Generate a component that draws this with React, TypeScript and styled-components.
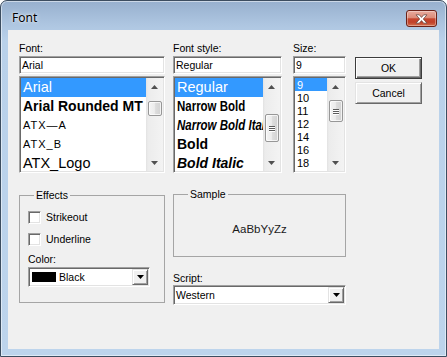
import React from 'react';
import styled, { createGlobalStyle, css } from 'styled-components';

const GlobalStyle = createGlobalStyle`
  html, body { margin: 0; padding: 0; background: #ffffff; }
  body { font-family: 'Liberation Sans', Arial, sans-serif; }
  * { box-sizing: border-box; }
`;

const sunken = css`
  border: 1px solid;
  border-color: #a0a0a0 #ffffff #ffffff #a0a0a0;
  box-shadow: inset 1px 1px 0 #696969, inset -1px -1px 0 #e3e3e3;
`;

const raised = css`
  border: 1px solid;
  border-color: #e3e3e3 #696969 #696969 #e3e3e3;
  box-shadow: inset 1px 1px 0 #ffffff, inset -1px -1px 0 #a0a0a0;
  background: #f0f0f0;
`;

const Frame = styled.div`
  width: 447px;
  height: 357px;
  border: 1px solid #3c4d60;
  border-radius: 7px 7px 0 0;
  background: linear-gradient(180deg, #97b0ce 0px, #aec6e1 24px, #b9d1ea 40px, #bdd4ec 100%);
  box-shadow: inset 0 0 0 1px rgba(255, 255, 255, 0.5);
  display: flex;
  flex-direction: column;
  overflow: hidden;
`;

const TitleBar = styled.div`
  height: 29px;
  flex-shrink: 0;
  display: flex;
  align-items: flex-start;
  justify-content: space-between;
  padding: 0 9px 0 11px;
`;

const Title = styled.span`
  font-family: 'Noto Sans', 'Open Sans', sans-serif;
  font-size: 12px;
  line-height: 16px;
  margin-top: 9px;
  color: #000;
  text-shadow: 0 0 5px rgba(255, 255, 255, 0.8), 0 0 2px rgba(255, 255, 255, 0.8);
`;

const CloseButton = styled.div`
  margin-top: 9px;
  width: 31px;
  height: 17px;
  border: 1px solid #6b2218;
  border-radius: 3px;
  background: linear-gradient(180deg, #e8ab9e 0%, #dc8c79 45%, #c6462e 52%, #c1412a 75%, #d4704f 100%);
  box-shadow: inset 0 0 0 1px rgba(255, 255, 255, 0.35);
  display: flex;
  align-items: center;
  justify-content: center;
`;

const Client = styled.div`
  margin: 0 7px 7px 7px;
  flex: 1;
  background: #f0f0f0;
  padding: 11px 0 0 11px;
  display: flex;
  flex-direction: column;
  font-size: 10.5px;
  color: #000;
`;

const TopRow = styled.div`
  display: flex;
  align-items: flex-start;
`;

const Column = styled.div<{ $w: number; $ml?: number; $mt?: number }>`
  width: ${(p) => p.$w}px;
  margin-left: ${(p) => p.$ml ?? 0}px;
  margin-top: ${(p) => p.$mt ?? 0}px;
  display: flex;
  flex-direction: column;
  flex-shrink: 0;
`;

const Label = styled.div`
  height: 14px;
  line-height: 14px;
  white-space: nowrap;
`;

const Edit = styled.div`
  ${sunken};
  margin-top: 1px;
  height: 18px;
  background: #fff;
  padding: 0 2px;
  line-height: 14px;
  display: flex;
  align-items: center;
  white-space: nowrap;
`;

const ListBox = styled.div`
  ${sunken};
  margin-top: 2px;
  height: 97px;
  background: #fff;
  padding: 1px;
  display: flex;
`;

const Items = styled.div`
  flex: 1;
  overflow: hidden;
  display: flex;
  flex-direction: column;
`;

const Item = styled.div<{
  $h: number;
  $size: number;
  $sel?: boolean;
  $bold?: boolean;
  $italic?: boolean;
  $spacing?: number;
  $lift?: number;
}>`
  height: ${(p) => p.$h}px;
  flex-shrink: 0;
  display: flex;
  align-items: center;
  padding-left: 2px;
  padding-bottom: ${(p) => p.$lift ?? 0}px;
  white-space: nowrap;
  overflow: hidden;
  font-size: ${(p) => p.$size}px;
  font-weight: ${(p) => (p.$bold ? 700 : 400)};
  font-style: ${(p) => (p.$italic ? 'italic' : 'normal')};
  letter-spacing: ${(p) => p.$spacing ?? 0}px;
  background: ${(p) => (p.$sel ? '#3399ff' : 'transparent')};
  color: ${(p) => (p.$sel ? '#ffffff' : '#000000')};
`;

const Narrow = styled.span`
  display: inline-block;
  transform: scaleX(0.82);
  transform-origin: left center;
`;

const ScrollBar = styled.div`
  width: 17px;
  flex-shrink: 0;
  display: flex;
  flex-direction: column;
  background: linear-gradient(90deg, #e2e2e2 0px, #ececec 2px, #f3f3f3 100%);
`;

const Arrow = styled.div`
  height: 17px;
  flex-shrink: 0;
  display: flex;
  align-items: center;
  justify-content: center;
`;

const Track = styled.div`
  flex: 1;
  display: flex;
  flex-direction: column;
`;

const Thumb = styled.div<{ $top: number; $h: number }>`
  margin: ${(p) => p.$top}px 1px 0 2px;
  height: ${(p) => p.$h}px;
  border: 1px solid #979797;
  border-radius: 2px;
  background: linear-gradient(90deg, #f4f4f4 0%, #ececec 45%, #dcdcdc 55%, #d2d2d2 100%);
  box-shadow: inset 0 0 0 1px rgba(255, 255, 255, 0.7);
  display: flex;
  flex-direction: column;
  align-items: center;
  justify-content: center;
  gap: 1px;
`;

const Grip = styled.div`
  width: 6px;
  height: 1px;
  background: #5c5c5c;
  box-shadow: 0 1px 0 #ffffff;
`;

const PushButton = styled.div<{ $default?: boolean }>`
  height: 22px;
  display: flex;
  align-items: center;
  justify-content: center;
  ${(p) =>
    p.$default
      ? css`
          border: 1px solid #3c3c3c;
          background: #f0f0f0;
          box-shadow: inset 1px 1px 0 #ffffff, inset -1px -1px 0 #696969, inset -2px -2px 0 #a0a0a0;
        `
      : raised};
`;

const ButtonStack = styled.div`
  margin-top: 16px;
  display: flex;
  flex-direction: column;
  gap: 3px;
`;

const BottomRow = styled.div`
  display: flex;
  align-items: flex-start;
  margin-top: 16px;
`;

const Group = styled.fieldset<{ $w: number; $h: number }>`
  margin: 0;
  padding: 0 8px;
  min-width: 0;
  width: ${(p) => p.$w}px;
  height: ${(p) => p.$h}px;
  border: 1px solid #a5a5a5;
`;

const Legend = styled.legend`
  margin-left: 6px;
  padding: 0 2px;
  line-height: 13px;
  font-size: 10.5px;
`;

const EffectsBody = styled.div`
  padding-top: 9px;
  display: flex;
  flex-direction: column;
`;

const CheckRow = styled.div<{ $mt?: number }>`
  display: flex;
  align-items: center;
  height: 13px;
  margin-top: ${(p) => p.$mt ?? 0}px;
`;

const CheckBox = styled.div`
  ${sunken};
  width: 13px;
  height: 13px;
  background: #fff;
  flex-shrink: 0;
`;

const CheckText = styled.span`
  margin-left: 5px;
  line-height: 13px;
`;

const FieldLabel = styled.div<{ $mt: number }>`
  height: 13px;
  line-height: 13px;
  margin-top: ${(p) => p.$mt}px;
`;

const Combo = styled.div<{ $w: number; $mt?: number }>`
  ${sunken};
  width: ${(p) => p.$w}px;
  height: 20px;
  margin-top: ${(p) => p.$mt ?? 0}px;
  background: #fff;
  padding: 1px;
  display: flex;
  align-items: stretch;
`;

const ComboValue = styled.div`
  flex: 1;
  display: flex;
  align-items: center;
  padding-left: 1px;
  gap: 3px;
  white-space: nowrap;
  overflow: hidden;
`;

const Swatch = styled.div<{ $color: string }>`
  width: 24px;
  height: 10px;
  background: ${(p) => p.$color};
  margin-left: 1px;
`;

const DropButton = styled.div`
  ${raised};
  width: 16px;
  flex-shrink: 0;
  display: flex;
  align-items: center;
  justify-content: center;
`;

const SampleBody = styled.div`
  height: 55px;
  display: flex;
  align-items: center;
  justify-content: center;
  font-size: 11.5px;
  color: #1a1a1a;
`;

const UpTri = () => (
  <svg width="7" height="4" viewBox="0 0 7 4">
    <path d="M3.5 0 L7 4 L0 4 Z" fill="#505050" />
  </svg>
);
const DownTri = ({ color = '#505050' }: { color?: string }) => (
  <svg width="7" height="4" viewBox="0 0 7 4">
    <path d="M0 0 L7 0 L3.5 4 Z" fill={color} />
  </svg>
);

type Row = {
  text: string;
  size: number;
  sel?: boolean;
  bold?: boolean;
  italic?: boolean;
  narrow?: boolean;
  spacing?: number;
};

const fontRows: Row[] = [
  { text: 'Arial', size: 14.5, sel: true },
  { text: 'Arial Rounded MT', size: 14, bold: true },
  { text: 'ATX—A', size: 11, spacing: 1 },
  { text: 'ATX_B', size: 11, spacing: 1 },
  { text: 'ATX_Logo', size: 14.5 },
];

const styleRows: Row[] = [
  { text: 'Regular', size: 14.5, sel: true },
  { text: 'Narrow Bold', size: 14, bold: true, narrow: true },
  { text: 'Narrow Bold Italic', size: 14, bold: true, italic: true, narrow: true },
  { text: 'Bold', size: 14, bold: true },
  { text: 'Bold Italic', size: 14, bold: true, italic: true },
];

const sizeRows: Row[] = ['9', '10', '11', '12', '14', '16', '18'].map((t, i) => ({
  text: t,
  size: 11,
  sel: i === 0,
}));

const List = ({
  rows,
  rowH,
  lift,
  thumbTop,
  thumbH,
  grip,
}: {
  rows: Row[];
  rowH: number;
  lift?: number;
  thumbTop: number;
  thumbH: number;
  grip?: boolean;
}) => (
  <ListBox>
    <Items>
      {rows.map((r) => (
        <Item
          key={r.text}
          $h={rowH}
          $lift={lift}
          $size={r.size}
          $sel={r.sel}
          $bold={r.bold}
          $italic={r.italic}
          $spacing={r.spacing}
        >
          {r.narrow ? <Narrow>{r.text}</Narrow> : r.text}
        </Item>
      ))}
    </Items>
    <ScrollBar>
      <Arrow>
        <UpTri />
      </Arrow>
      <Track>
        <Thumb $top={thumbTop} $h={thumbH}>
          {grip && (
            <>
              <Grip />
              <Grip />
              <Grip />
            </>
          )}
        </Thumb>
      </Track>
      <Arrow>
        <DownTri />
      </Arrow>
    </ScrollBar>
  </ListBox>
);

export default function App() {
  return (
    <>
      <GlobalStyle />
      <Frame>
        <TitleBar>
          <Title>Font</Title>
          <CloseButton>
            <svg width="13" height="10" viewBox="0 0 13 10">
              <path
                d="M1 0.8 L4.3 0.8 L6.5 3.4 L8.7 0.8 L12 0.8 L8.3 5 L12 9.2 L8.7 9.2 L6.5 6.6 L4.3 9.2 L1 9.2 L4.7 5 Z"
                fill="#ffffff"
                stroke="#6a4a44"
                strokeWidth="0.8"
                strokeLinejoin="round"
              />
            </svg>
          </CloseButton>
        </TitleBar>
        <Client>
          <TopRow>
            <Column $w={146}>
              <Label>Font:</Label>
              <Edit>Arial</Edit>
              <List rows={fontRows} rowH={19} lift={2} thumbTop={6} thumbH={15} />
            </Column>
            <Column $w={109} $ml={8}>
              <Label>Font style:</Label>
              <Edit>Regular</Edit>
              <List rows={styleRows} rowH={19} lift={2} thumbTop={19} thumbH={28} grip />
            </Column>
            <Column $w={53} $ml={11}>
              <Label>Size:</Label>
              <Edit>9</Edit>
              <List rows={sizeRows} rowH={13} thumbTop={5} thumbH={22} grip />
            </Column>
            <Column $w={67} $ml={9}>
              <ButtonStack>
                <PushButton $default>OK</PushButton>
                <PushButton>Cancel</PushButton>
              </ButtonStack>
            </Column>
          </TopRow>
          <BottomRow>
            <Group $w={146} $h={114}>
              <Legend>Effects</Legend>
              <EffectsBody>
                <CheckRow>
                  <CheckBox />
                  <CheckText>Strikeout</CheckText>
                </CheckRow>
                <CheckRow $mt={9}>
                  <CheckBox />
                  <CheckText>Underline</CheckText>
                </CheckRow>
                <FieldLabel $mt={7}>Color:</FieldLabel>
                <Combo $w={122} $mt={1}>
                  <ComboValue>
                    <Swatch $color="#000000" />
                    Black
                  </ComboValue>
                  <DropButton>
                    <DownTri color="#000" />
                  </DropButton>
                </Combo>
              </EffectsBody>
            </Group>
            <Column $w={173} $ml={8} $mt={-1}>
              <Group $w={173} $h={69}>
                <Legend>Sample</Legend>
                <SampleBody>AaBbYyZz</SampleBody>
              </Group>
              <FieldLabel $mt={15}>Script:</FieldLabel>
              <Combo $w={173}>
                <ComboValue>Western</ComboValue>
                <DropButton>
                  <DownTri color="#000" />
                </DropButton>
              </Combo>
            </Column>
          </BottomRow>
        </Client>
      </Frame>
    </>
  );
}
